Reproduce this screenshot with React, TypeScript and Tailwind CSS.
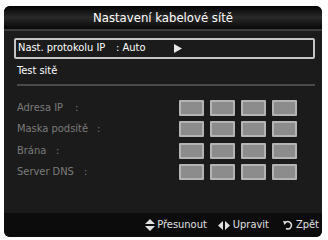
import React from "react";

const font = { fontFamily: '"DejaVu Sans Condensed", "DejaVu Sans", sans-serif' };

function IpBoxes() {
  return (
    <div className="flex gap-[6px]">
      {[0, 1, 2, 3].map((i) => (
        <div
          key={i}
          className="w-[25px] h-[16px] bg-[#8c8c8c] border-2 border-[#b4b4b4] rounded-[1px]"
        />
      ))}
    </div>
  );
}

function Row({ label, colonX }: { label: string; colonX: number }) {
  return (
    <div className="flex items-center h-[21.5px]">
      <div className="relative w-[162px] h-full flex items-center text-[11px] text-[#7c7c7c]">
        <span>{label}</span>
        <span className="absolute" style={{ left: colonX }}>:</span>
      </div>
      <IpBoxes />
    </div>
  );
}

export default function App() {
  return (
    <div className="w-[328px] h-[240px] bg-white pt-[6px] pl-[4px]" style={font}>
      <div className="w-[318px] h-[231px] rounded-[6px] bg-[#1b1b1b] overflow-hidden flex flex-col">
        <div className="h-[23px] flex items-center justify-center bg-gradient-to-b from-[#050505] via-[#2a2a2a] to-[#080808] text-[13px] text-white">
          Nastavení kabelové sítě
        </div>
        <div className="h-[2px] bg-[#3c3c3c]" />
        <div className="flex-1 pl-[10px] pr-[7px] pt-[7px]">
          <div className="h-[21px] border-2 border-[#c4c4c4] rounded-[2px] flex items-center pl-[2px] text-[11px] text-white">
            <span className="w-[98px]">Nast. protokolu IP</span>
            <span className="w-[58px]">: Auto</span>
            <svg width="8" height="9" viewBox="0 0 8 9">
              <path d="M0 0 L8 4.5 L0 9 Z" fill="#e8e8e8" />
            </svg>
          </div>
          <div className="h-[24px] flex items-center pl-[3px] text-[11px] text-white">Test sitě</div>
          <div className="ml-[3px] h-[2px] bg-[#4a4a4a] mt-[1px]" />
          <div className="pl-[3px] pt-[11px]">
            <Row label="Adresa IP" colonX={58} />
            <Row label="Maska podsítě" colonX={80} />
            <Row label="Brána" colonX={39} />
            <Row label="Server DNS" colonX={67} />
          </div>
        </div>
        <div className="h-[24px] bg-[#0c0c0c] flex items-center justify-end pr-[3px] text-[11px] text-[#e0e0e0]">
          <svg width="10" height="12" viewBox="0 0 10 12" className="mr-[2px]">
            <path d="M5 0 L10 5 L0 5 Z M0 7 L10 7 L5 12 Z" fill="#e0e0e0" />
          </svg>
          <span className="mr-[11px]">Přesunout</span>
          <svg width="12" height="9" viewBox="0 0 12 9" className="mr-[3px]">
            <path d="M0 4.5 L5 0 L5 9 Z M7 0 L12 4.5 L7 9 Z" fill="#e0e0e0" />
          </svg>
          <span className="mr-[14px]">Upravit</span>
          <svg width="10" height="10" viewBox="0 0 10 10" className="mr-[3px]">
            <path d="M2 3 A3.6 3.6 0 1 1 3 8.5" fill="none" stroke="#e0e0e0" strokeWidth="1.5" />
            <path d="M0 1 L4 1.5 L1.5 5 Z" fill="#e0e0e0" />
          </svg>
          <span>Zpět</span>
        </div>
      </div>
    </div>
  );
}
